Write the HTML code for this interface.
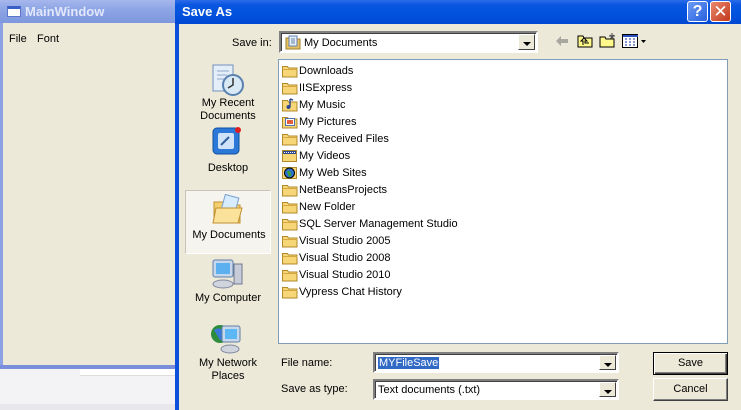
<!DOCTYPE html>
<html><head><meta charset="utf-8">
<style>
*{margin:0;padding:0;box-sizing:border-box}
body{width:741px;height:410px;overflow:hidden;background:#ECE9D8;font-family:"Liberation Sans",Tahoma,sans-serif;font-size:11px;color:#000;position:relative}
.abs{position:absolute}
.t{position:absolute;white-space:nowrap}
.combo{position:absolute;background:#fff;border:2px solid;border-color:#808080 #fff #fff #808080;box-shadow:inset 1px 1px 0 #404040}
.dd{position:absolute;right:1px;top:1px;bottom:1px;width:17px;background:#ECE9D8;border:1px solid;border-color:#fff #404040 #404040 #fff}
.dd:after{content:"";position:absolute;left:4px;top:7px;border-left:4px solid transparent;border-right:4px solid transparent;border-top:4px solid #000}
.btn{position:absolute;background:#ECE9D8;border:1px solid;border-color:#fff #404040 #404040 #fff;box-shadow:inset -1px -1px 0 #808080;text-align:center;line-height:20px;font-size:11px}
.row{position:absolute;left:3px;height:17px;line-height:17px;white-space:nowrap}
.row svg{position:absolute;left:0;top:1px}
.row span{position:absolute;left:17px}
.pl{position:absolute;width:86px;text-align:center;line-height:13px}
</style></head><body>
<div class="abs" style="left:0;top:0;width:176px;height:23px;background:linear-gradient(#A6B7EC,#8EA6E6 40%,#7D97DE)"></div>
<div class="abs" style="left:7px;top:6px;width:14px;height:11px;background:#fff;border:1px solid #5B77C9;border-top:3px solid #3A5FC6"></div>
<div class="t" style="left:25px;top:4px;color:#E2E8FA;font-weight:bold;font-size:13px">MainWindow</div>
<div class="abs" style="left:0;top:23px;width:3px;height:345px;background:#8CA2E4"></div>
<div class="t" style="left:9px;top:33px;font-size:11px">File</div>
<div class="t" style="left:37px;top:33px;font-size:11px">Font</div>
<div class="abs" style="left:0;top:365px;width:176px;height:4px;background:#7A8FDC"></div>
<div class="abs" style="left:0;top:369px;width:176px;height:41px;background:#F3F3F6"></div>
<div class="abs" style="left:80px;top:369px;width:96px;height:7px;background:#fff;border-bottom:1px solid #ddd"></div>
<div class="abs" style="left:0;top:404px;width:176px;height:6px;background:#E8E8EC"></div>

<div class="abs" style="left:175px;top:0;width:566px;height:24px;background:linear-gradient(#2C6CEA,#0A57E0 20%,#0152DE 60%,#0048D2)"></div>
<div class="t" style="left:182px;top:4px;color:#fff;font-weight:bold;font-size:13px">Save As</div>
<div class="abs" style="left:687px;top:1px;width:21px;height:21px;border-radius:3px;background:linear-gradient(135deg,#6A9BF6,#2960DE);border:1px solid #fff;color:#fff;font-weight:bold;font-size:16px;text-align:center;line-height:19px">?</div>
<div class="abs" style="left:710px;top:1px;width:21px;height:21px;border-radius:3px;background:linear-gradient(135deg,#E98A70,#C2371A);border:1px solid #fff;color:#fff;font-size:17px;text-align:center;line-height:19px">✕</div>
<div class="abs" style="left:175px;top:24px;width:4px;height:386px;background:#0B4FDB"></div>
<div class="abs" style="left:179px;top:24px;width:562px;height:386px;background:#ECE9D8"></div>

<div class="t" style="left:232px;top:37px">Save in:</div>
<div class="combo" style="left:279px;top:31px;width:259px;height:22px">
 <svg class="abs" style="left:4px;top:2px" width="16" height="15"><path d="M1 3h5l1 1h8v10H1z" fill="#E8C060" stroke="#A08030"/><rect x="4" y="1" width="8" height="10" fill="#E8F0F8" stroke="#6080B0"/><path d="M6 4h4M6 6h4M6 8h4" stroke="#6080B0"/></svg>
 <div class="t" style="left:23px;top:4px">My Documents</div>
 <div class="dd"></div>
</div>
<svg class="abs" style="left:555px;top:35px" width="14" height="12"><path d="M1 6l5-5v3h7v4H6v3z" fill="#A8A8A0"/></svg>
<svg class="abs" style="left:577px;top:34px" width="16" height="14"><path d="M1 2h5l1 2h8v9H1z" fill="#FFF88A" stroke="#000"/><path d="M6 11V7h-2l3-3 3 3H8v2h4" fill="none" stroke="#000"/></svg>
<svg class="abs" style="left:599px;top:32px" width="18" height="16"><path d="M1 5h5l1 2h8v8H1z" fill="#FFF88A" stroke="#000"/><path d="M13 1v5M11 3l4 4M15 3l-4 4M10 4h6" stroke="#444"/></svg>
<svg class="abs" style="left:622px;top:34px" width="25" height="14"><rect x=".5" y=".5" width="15" height="13" fill="#fff" stroke="#000"/><rect x="1" y="1" width="15" height="2" fill="#2A4FC0"/><path d="M3 5h2M7 5h2M11 5h2M3 8h2M7 8h2M11 8h2M3 11h2M7 11h2M11 11h2" stroke="#1030A0"/><path d="M19 6h5l-2.5 3z" fill="#000"/></svg>

<svg class="abs" style="left:210px;top:63px" width="34" height="34"><rect x="3" y="2" width="20" height="26" fill="#E4EEF8" stroke="#7090C0"/><path d="M7 8h12M7 12h10M7 16h8" stroke="#90A8D0"/><circle cx="23" cy="22" r="10" fill="#D8E8F4" stroke="#5880B0" stroke-width="2"/><path d="M23 15v7l-5 3" stroke="#333" stroke-width="1.5" fill="none"/></svg>
<div class="pl" style="left:185px;top:97px">My Recent<br>Documents</div>
<svg class="abs" style="left:211px;top:126px" width="32" height="32"><rect x="2" y="2" width="26" height="26" rx="4" fill="#2B78D8" stroke="#1050A0"/><rect x="7" y="7" width="16" height="16" rx="2" fill="#CFE2F8"/><path d="M10 19l8-8" stroke="#3060A0" stroke-width="2"/><circle cx="27" cy="4" r="3" fill="#E02020"/></svg>
<div class="pl" style="left:185px;top:162px">Desktop</div>
<div class="abs" style="left:185px;top:190px;width:86px;height:64px;background:#F6F4EE;border:1px solid;border-color:#C8C4B8 #fff #fff #C8C4B8"></div>
<svg class="abs" style="left:211px;top:194px" width="34" height="32"><path d="M3 8h9l3 3h14v18H3z" fill="#F4D070" stroke="#C09030"/><rect x="12" y="2" width="14" height="17" fill="#D8ECFF" stroke="#7AA0D0" transform="rotate(15 19 10)"/><path d="M5 14h26l-4 15H2z" fill="#FBE29A" stroke="#C09030"/></svg>
<div class="pl" style="left:186px;top:229px">My Documents</div>
<svg class="abs" style="left:209px;top:258px" width="36" height="34"><rect x="4" y="2" width="20" height="17" rx="2" fill="#C8D8EC" stroke="#6080A8"/><rect x="7" y="5" width="14" height="11" fill="#5CB0F0"/><rect x="25" y="6" width="8" height="20" fill="#C8CCD8" stroke="#707890"/><ellipse cx="14" cy="26" rx="10" ry="4" fill="#D0D4DC" stroke="#8088A0"/></svg>
<div class="pl" style="left:185px;top:292px">My Computer</div>
<svg class="abs" style="left:210px;top:322px" width="36" height="34"><circle cx="10" cy="12" r="9" fill="#2E8C3C"/><path d="M4 8q6-4 10 2t-4 8" fill="#3A78D8"/><rect x="12" y="4" width="18" height="16" rx="2" fill="#C8D8EC" stroke="#6080A8"/><rect x="15" y="7" width="12" height="10" fill="#5CB8F4"/><ellipse cx="20" cy="27" rx="9" ry="4" fill="#D0D4DC" stroke="#8088A0"/></svg>
<div class="pl" style="left:185px;top:357px">My Network<br>Places</div>

<div class="abs" style="left:278px;top:59px;width:450px;height:285px;background:#fff;border:1px solid #7F9DB9">
 <div class="row" style="top:3px"><svg width="16" height="14"><path d="M.5 2.5h5l1 1.5h8.5v9H.5z" fill="#F6D676" stroke="#B08A28"/><path d="M.5 5.5h15" stroke="#D8A840"/></svg><span>Downloads</span></div>
 <div class="row" style="top:20px"><svg width="16" height="14"><path d="M.5 2.5h5l1 1.5h8.5v9H.5z" fill="#F6D676" stroke="#B08A28"/><path d="M.5 5.5h15" stroke="#D8A840"/></svg><span>IISExpress</span></div>
 <div class="row" style="top:37px"><svg width="16" height="14"><path d="M.5 2.5h5l1 1.5h8.5v9H.5z" fill="#F6D676" stroke="#B08A28"/><path d="M8 1v8M8 1l3 1" stroke="#304890" stroke-width="1.5"/><circle cx="6.5" cy="9" r="2" fill="#304890"/></svg><span>My Music</span></div>
 <div class="row" style="top:54px"><svg width="16" height="14"><path d="M.5 2.5h5l1 1.5h8.5v9H.5z" fill="#F6D676" stroke="#B08A28"/><rect x="3.5" y="3.5" width="9" height="7" fill="#fff" stroke="#5070B0"/><rect x="5" y="5" width="6" height="4" fill="#E06040"/></svg><span>My Pictures</span></div>
 <div class="row" style="top:71px"><svg width="16" height="14"><path d="M.5 2.5h5l1 1.5h8.5v9H.5z" fill="#F6D676" stroke="#B08A28"/><path d="M.5 5.5h15" stroke="#D8A840"/></svg><span>My Received Files</span></div>
 <div class="row" style="top:88px"><svg width="16" height="14"><rect x=".5" y="1.5" width="14" height="11" fill="#F6D676" stroke="#B08A28"/><rect x="1" y="2" width="13" height="3" fill="#304890"/><path d="M2 3.5h11" stroke="#fff" stroke-dasharray="1 1"/></svg><span>My Videos</span></div>
 <div class="row" style="top:105px"><svg width="16" height="14"><rect x=".5" y="1.5" width="14" height="11" fill="#F6D676" stroke="#B08A28"/><circle cx="7.5" cy="7" r="5" fill="#2A70D0" stroke="#000"/><path d="M5 5q3-1 4 2t-2 4" fill="#3AA040"/></svg><span>My Web Sites</span></div>
 <div class="row" style="top:122px"><svg width="16" height="14"><path d="M.5 2.5h5l1 1.5h8.5v9H.5z" fill="#F6D676" stroke="#B08A28"/><path d="M.5 5.5h15" stroke="#D8A840"/></svg><span>NetBeansProjects</span></div>
 <div class="row" style="top:139px"><svg width="16" height="14"><path d="M.5 2.5h5l1 1.5h8.5v9H.5z" fill="#F6D676" stroke="#B08A28"/><path d="M.5 5.5h15" stroke="#D8A840"/></svg><span>New Folder</span></div>
 <div class="row" style="top:156px"><svg width="16" height="14"><path d="M.5 2.5h5l1 1.5h8.5v9H.5z" fill="#F6D676" stroke="#B08A28"/><path d="M.5 5.5h15" stroke="#D8A840"/></svg><span>SQL Server Management Studio</span></div>
 <div class="row" style="top:173px"><svg width="16" height="14"><path d="M.5 2.5h5l1 1.5h8.5v9H.5z" fill="#F6D676" stroke="#B08A28"/><path d="M.5 5.5h15" stroke="#D8A840"/></svg><span>Visual Studio 2005</span></div>
 <div class="row" style="top:190px"><svg width="16" height="14"><path d="M.5 2.5h5l1 1.5h8.5v9H.5z" fill="#F6D676" stroke="#B08A28"/><path d="M.5 5.5h15" stroke="#D8A840"/></svg><span>Visual Studio 2008</span></div>
 <div class="row" style="top:207px"><svg width="16" height="14"><path d="M.5 2.5h5l1 1.5h8.5v9H.5z" fill="#F6D676" stroke="#B08A28"/><path d="M.5 5.5h15" stroke="#D8A840"/></svg><span>Visual Studio 2010</span></div>
 <div class="row" style="top:224px"><svg width="16" height="14"><path d="M.5 2.5h5l1 1.5h8.5v9H.5z" fill="#F6D676" stroke="#B08A28"/><path d="M.5 5.5h15" stroke="#D8A840"/></svg><span>Vypress Chat History</span></div>
</div>

<div class="t" style="left:281px;top:357px">File name:</div>
<div class="t" style="left:281px;top:383px">Save as type:</div>
<div class="combo" style="left:373px;top:352px;width:246px;height:21px">
 <div class="t" style="left:3px;top:3px;background:#316AC5;color:#fff;padding:0 1px">MYFileSave</div>
 <div class="dd"></div>
</div>
<div class="combo" style="left:373px;top:379px;width:246px;height:21px">
 <div class="t" style="left:3px;top:3px">Text documents (.txt)</div>
 <div class="dd"></div>
</div>
<div class="btn" style="left:653px;top:352px;width:75px;height:23px;border:1px solid #000;box-shadow:inset 1px 1px 0 #fff,inset -1px -1px 0 #404040,inset -2px -2px 0 #808080">Save</div>
<div class="btn" style="left:653px;top:378px;width:75px;height:23px">Cancel</div>
</body></html>
